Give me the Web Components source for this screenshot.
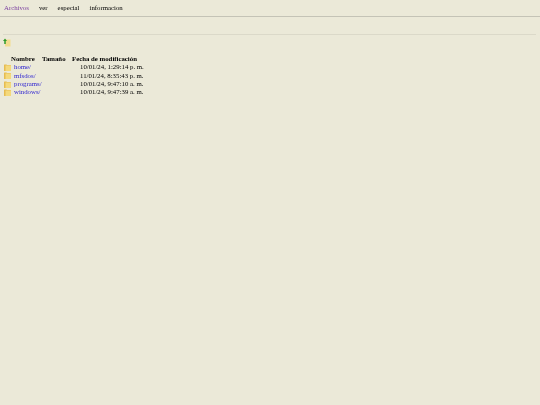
<!DOCTYPE html>
<html lang="es">
<head>
<meta charset="utf-8">
<title>Archivos</title>
<style>
  html, body { margin: 0; height: 100%; background: #ebe9d8; }
  body { font: 6.8px "Liberation Serif", serif; color: #000; filter: blur(.35px); }
</style>
</head>
<body>
<template id="folder-icon">
  <svg width="7" height="7" viewBox="0 0 14 14" style="display:block">
    <path d="M1 1h4l1 1h7a1 1 0 0 1 1 1v10a1 1 0 0 1-1 1H1a1 1 0 0 1-1-1V2a1 1 0 0 1 1-1z" fill="#e6bc50"/>
    <path d="M3 3h11v11H3z" fill="#f4d97c"/>
  </svg>
</template>

<app-menu>
  <menu-item active>Archivos</menu-item>
  <menu-item>ver</menu-item>
  <menu-item>especial</menu-item>
  <menu-item>informacion</menu-item>
</app-menu>
<path-bar></path-bar>
<file-list>
  <file-row name="home/" date="10/01/24, 1:29:14 p. m."></file-row>
  <file-row name="mfsdos/" date="11/01/24, 8:35:43 p. m."></file-row>
  <file-row name="programs/" date="10/01/24, 9:47:10 a. m."></file-row>
  <file-row name="windows/" date="10/01/24, 9:47:39 a. m."></file-row>
</file-list>

<script>
class AppMenu extends HTMLElement {
  constructor() {
    super();
    this.attachShadow({mode: 'open'}).innerHTML = `
      <style>
        :host {
          display: flex;
          gap: 10px;
          height: 12.500px;
          padding: 3.500px 0 0 4px;
          border-bottom: 1px solid #c4c3b6;
        }
      </style>
      <slot></slot>
    `;
  }
}

class MenuItem extends HTMLElement {
  constructor() {
    super();
    this.attachShadow({mode: 'open'}).innerHTML = `
      <style>
        :host { display: block; line-height: 8px; color: #000; }
        :host([active]) { color: #7a3fa0; }
      </style>
      <slot></slot>
    `;
  }
}

class PathBar extends HTMLElement {
  constructor() {
    super();
    this.attachShadow({mode: 'open'}).innerHTML = `
      <style>
        :host { display: block; padding: 17px 4px 0 3px; }
        .rule { height: 1px; background: #dbd9c9; }
        svg { display: block; margin-top: 3px; }
      </style>
      <div class="rule"></div>
      <svg width="8" height="9" viewBox="0 0 16 18">
        <path d="M4 3h11v14H4z" fill="#f2dc8e"/>
        <path d="M4 1L8 6H5.500v6h-3V6H0z" fill="#2e9a2a"/>
      </svg>
    `;
  }
}

class FileList extends HTMLElement {
  constructor() {
    super();
    this.attachShadow({mode: 'open'}).innerHTML = `
      <style>
        :host { display: block; padding: 8px 0 0 3px; }
        .head {
          display: grid;
          grid-template-columns: 8px 31px 30px auto;
          height: 8.300px;
          line-height: 8.300px;
          font-weight: bold;
        }
      </style>
      <div class="head"><span></span><span>Nombre</span><span>Tamaño</span><span>Fecha de modificación</span></div>
      <slot></slot>
    `;
  }
}

class FileRow extends HTMLElement {
  constructor() {
    super();
    const root = this.attachShadow({mode: 'open'});
    root.innerHTML = `
      <style>
        :host {
          display: grid;
          grid-template-columns: 11px 66px auto;
          align-items: center;
          height: 8.400px;
          line-height: 8.400px;
        }
        .icon { padding-left: 1px; }
        a { color: #2a1fd0; text-decoration: none; }
      </style>
      <span class="icon"></span><a href="#"></a><span class="date"></span>
    `;
    root.querySelector('.icon').append(document.getElementById('folder-icon').content.cloneNode(true));
    root.querySelector('a').textContent = this.getAttribute('name');
    root.querySelector('.date').textContent = this.getAttribute('date');
  }
}

customElements.define('app-menu', AppMenu);
customElements.define('menu-item', MenuItem);
customElements.define('path-bar', PathBar);
customElements.define('file-list', FileList);
customElements.define('file-row', FileRow);
</script>
</body>
</html>
